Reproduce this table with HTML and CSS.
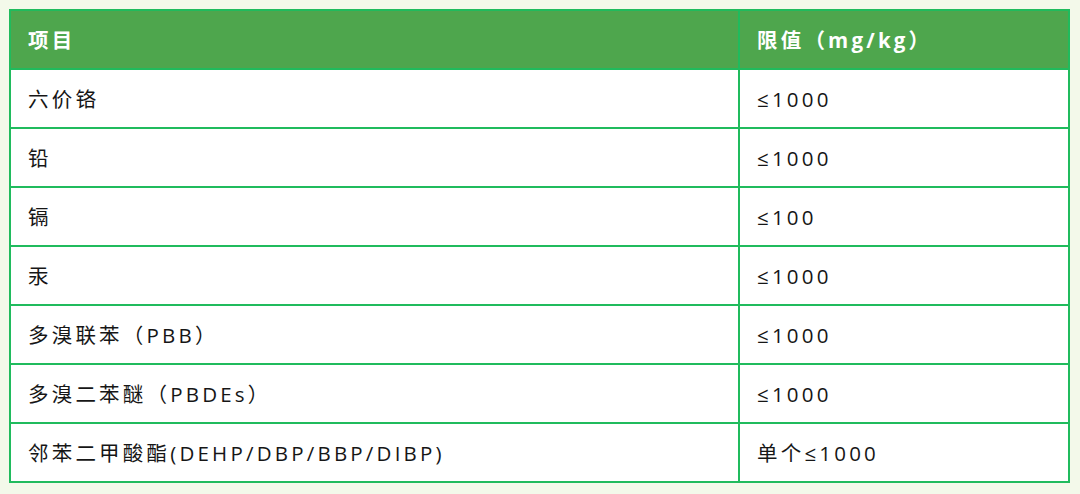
FILE: index.html
```html
<!DOCTYPE html>
<html lang="zh-CN">
<head>
<meta charset="utf-8">
<link rel="stylesheet" href="styles.css">
</head>
<body>
<div class="page">
  <table class="limits">
    <thead>
      <tr><th class="c1">项目</th><th class="c2">限值（mg/kg）</th></tr>
    </thead>
    <tbody>
      <tr><td>六价铬</td><td>≤1000</td></tr>
      <tr><td>铅</td><td>≤1000</td></tr>
      <tr><td>镉</td><td>≤100</td></tr>
      <tr><td>汞</td><td>≤1000</td></tr>
      <tr><td>多溴联苯（PBB）</td><td>≤1000</td></tr>
      <tr><td>多溴二苯醚（PBDEs）</td><td>≤1000</td></tr>
      <tr><td>邻苯二甲酸酯(DEHP/DBP/BBP/DIBP)</td><td>单个≤1000</td></tr>
    </tbody>
  </table>
</div>
</body>
</html>
```
FILE: styles.css
```css
html, body {
  margin: 0;
  padding: 0;
  background: #f3f9ea;
}
.page {
  padding: 9px 0 0 9px;
}
.limits {
  border-collapse: collapse;
  width: 1061px;
  font-family: "Open Sans", "Noto Sans CJK SC", sans-serif;
  font-size: 20.5px;
  letter-spacing: 3.2px;
  color: #161616;
  background: #ffffff;
}
.limits th, .limits td {
  border: 2px solid #20bb5d;
  padding: 1px 0 0 17px;
  height: 56px;
  text-align: left;
  vertical-align: middle;
  line-height: 24px;
}
.limits th {
  background: #4ea64d;
  color: #ffffff;
  font-weight: 700;
  letter-spacing: 3.2px;
}
.limits .c1 {
  width: 710px;
}
```
